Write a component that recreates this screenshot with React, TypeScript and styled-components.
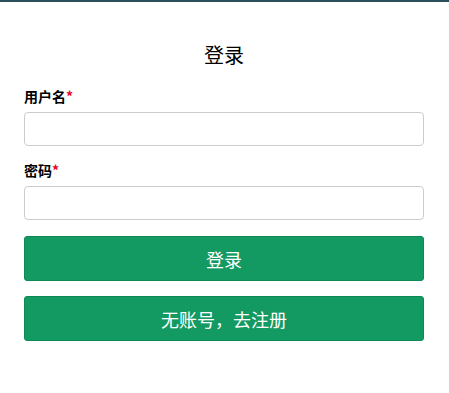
import React from "react";
import styled, { createGlobalStyle } from "styled-components";

const Global = createGlobalStyle`
  html, body { margin: 0; padding: 0; background: #fff; }
  body { font-family: "Microsoft YaHei", "Noto Sans CJK SC", "Liberation Sans", sans-serif; color: #000; }
  * { box-sizing: border-box; }
`;

const Page = styled.div`
  border-top: 2px solid #2c4d5c;
  padding: 0 25px 0 24px;
`;

const Title = styled.h1`
  margin: 0;
  padding-top: 39px;
  font-size: 20px;
  font-weight: normal;
  text-align: center;
  line-height: 28px;
  height: 84px;
`;

const Field = styled.div`
  display: flex;
  flex-direction: column;
  margin-bottom: 14px;
`;

const Label = styled.label`
  font-size: 14px;
  font-weight: bold;
  line-height: 20px;
  margin-bottom: 6px;
`;

const Star = styled.span`
  color: #e8001c;
`;

const Input = styled.input`
  height: 34px;
  width: 100%;
  border: 1px solid #ccc;
  border-radius: 4px;
  padding: 6px 12px;
  font-size: 14px;
`;

const Actions = styled.div`
  display: flex;
  flex-direction: column;
  gap: 15px;
  padding-top: 2px;
`;

const Button = styled.button`
  display: block;
  width: 100%;
  height: 45px;
  background: #139a63;
  border: 1px solid #0d8a54;
  border-radius: 3px;
  color: #fff;
  font-size: 18px;
  font-family: inherit;
  line-height: 24px;
  cursor: pointer;
`;

export default function App() {
  return (
    <>
      <Global />
      <Page>
        <Title>登录</Title>
        <Field>
          <Label>
            用户名<Star>*</Star>
          </Label>
          <Input type="text" />
        </Field>
        <Field>
          <Label>
            密码<Star>*</Star>
          </Label>
          <Input type="password" />
        </Field>
        <Actions>
          <Button>登录</Button>
          <Button>无账号，去注册</Button>
        </Actions>
      </Page>
    </>
  );
}
